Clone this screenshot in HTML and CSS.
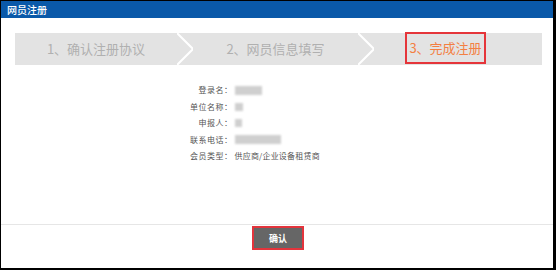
FILE: index.html
```html
<!DOCTYPE html>
<html lang="zh">
<head>
<meta charset="utf-8">
<title>网员注册</title>
<link rel="stylesheet" href="styles.css">
</head>
<body>
<div class="frame">
  <div class="header">网员注册</div>
  <div class="main">
    <div class="steps">
      <div class="step step1">1、确认注册协议</div>
      <svg class="chev" width="16" height="32" viewBox="0 0 16 32"><polyline points="0,0 16,16 0,32" fill="none" stroke="#ffffff" stroke-width="2"/></svg>
      <div class="step step2">2、网员信息填写</div>
      <svg class="chev" width="16" height="32" viewBox="0 0 16 32"><polyline points="0,0 16,16 0,32" fill="none" stroke="#ffffff" stroke-width="2"/></svg>
      <div class="step step3"><span class="current">3、完成注册</span></div>
    </div>
    <div class="info">
      <div class="label">登录名：</div><div class="value"><span class="blur b1"></span></div>
      <div class="label">单位名称：</div><div class="value"><span class="blur b2"></span></div>
      <div class="label">申报人：</div><div class="value"><span class="blur b3"></span></div>
      <div class="label">联系电话：</div><div class="value"><span class="blur b4"></span></div>
      <div class="label">会员类型：</div><div class="value">供应商/企业设备租赁商</div>
    </div>
  </div>
  <div class="footer">
    <button class="btn">确认</button>
  </div>
</div>
</body>
</html>
```
FILE: styles.css
```css
* { box-sizing: border-box; }
html, body { margin: 0; padding: 0; background: #fff; }
body { font-family: "Noto Sans CJK SC", "Noto Sans", sans-serif; }
.frame {
  width: 556px;
  height: 270px;
  border-top: 1px solid #000;
  border-left: 1px solid #000;
  border-right: 3px solid #000;
  border-bottom: 2px solid #000;
  display: flex;
  flex-direction: column;
}
.header {
  height: 17px;
  line-height: 17px;
  background: #0a59a9;
  color: #fff;
  font-size: 10px;
  font-weight: 500;
  padding-left: 6px;
}
.main {
  height: 206px;
  padding-top: 15px;
}
.steps {
  margin: 0 11px 0 14px;
  height: 32px;
  background: #e3e3e3;
  display: flex;
  align-items: center;
}
.step {
  font-size: 13px;
  color: #b0b0b0;
  text-align: center;
  line-height: 32px;
  height: 32px;
}
.step1 { width: 162px; }
.step2 { width: 165px; }
.step3 { flex: 1; text-align: left; padding-left: 31px; }
.chev { display: block; flex: none; }
.current {
  display: inline-block;
  width: 81px;
  height: 32px;
  line-height: 28px;
  border: 2px solid #e5353a;
  color: #f37f42;
  text-align: center;
  margin-top: -1px;
  vertical-align: top;
}
.info {
  margin-top: 17px;
  padding-left: 189px;
  display: grid;
  grid-template-columns: auto 1fr;
  column-gap: 2px;
  font-size: 8px;
  line-height: 16.5px;
  color: #555;
}
.label { text-align: right; letter-spacing: 0.5px; }
.value { display: flex; align-items: center; letter-spacing: 0.2px; }
.blur {
  display: inline-block;
  background: #cfcfcf;
  filter: blur(1.2px);
}
.b1 { width: 27px; height: 9px; }
.b2 { width: 8px; height: 8px; }
.b3 { width: 7px; height: 8px; }
.b4 { width: 46px; height: 9px; }
.footer {
  flex: 1;
  border-top: 1px solid #e6e6e6;
  display: flex;
  justify-content: center;
  padding-left: 2px;
}
.btn {
  width: 52px;
  height: 24px;
  margin-top: 1px;
  background: #666;
  border: 2px solid #e3343c;
  color: #fff;
  font-family: "Noto Sans CJK SC", sans-serif;
  font-size: 9px;
  font-weight: bold;
  padding: 0;
}
```
